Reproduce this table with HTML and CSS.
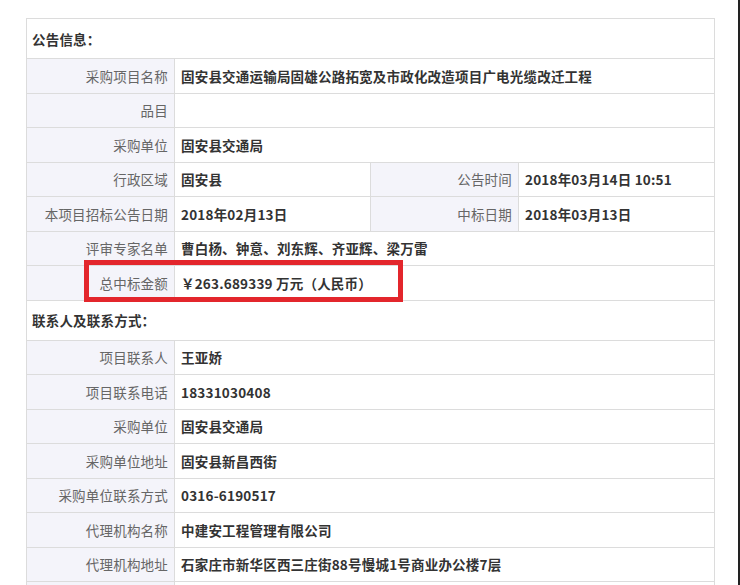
FILE: index.html
```html
<!DOCTYPE html>
<html lang="zh-CN">
<head>
    <meta charset="UTF-8">
    <title>公告信息</title>
    <link rel="stylesheet" href="styles.css">
</head>
<body>
<div class="page">
    <div class="notice">
        <table class="info-table">
            <colgroup>
                <col class="col-label">
                <col class="col-value">
                <col class="col-label">
                <col class="col-value">
            </colgroup>
            <tr class="section">
                <td colspan="4">公告信息：</td>
            </tr>
            <tr>
                <th>采购项目名称</th>
                <td colspan="3">固安县交通运输局固雄公路拓宽及市政化改造项目广电光缆改迁工程</td>
            </tr>
            <tr>
                <th>品目</th>
                <td colspan="3"></td>
            </tr>
            <tr>
                <th>采购单位</th>
                <td colspan="3">固安县交通局</td>
            </tr>
            <tr>
                <th>行政区域</th>
                <td>固安县</td>
                <th>公告时间</th>
                <td>2018年03月14日 10:51</td>
            </tr>
            <tr>
                <th>本项目招标公告日期</th>
                <td>2018年02月13日</td>
                <th>中标日期</th>
                <td>2018年03月13日</td>
            </tr>
            <tr>
                <th>评审专家名单</th>
                <td colspan="3">曹白杨、钟意、刘东辉、齐亚辉、梁万雷</td>
            </tr>
            <tr>
                <th>总中标金额</th>
                <td colspan="3">￥263.689339 万元（人民币）</td>
            </tr>
            <tr class="section">
                <td colspan="4">联系人及联系方式：</td>
            </tr>
            <tr>
                <th>项目联系人</th>
                <td colspan="3">王亚娇</td>
            </tr>
            <tr>
                <th>项目联系电话</th>
                <td colspan="3">18331030408</td>
            </tr>
            <tr>
                <th>采购单位</th>
                <td colspan="3">固安县交通局</td>
            </tr>
            <tr>
                <th>采购单位地址</th>
                <td colspan="3">固安县新昌西街</td>
            </tr>
            <tr>
                <th>采购单位联系方式</th>
                <td colspan="3">0316-6190517</td>
            </tr>
            <tr>
                <th>代理机构名称</th>
                <td colspan="3">中建安工程管理有限公司</td>
            </tr>
            <tr>
                <th>代理机构地址</th>
                <td colspan="3">石家庄市新华区西三庄街88号慢城1号商业办公楼7层</td>
            </tr>
            <tr>
                <th></th>
                <td colspan="3"></td>
            </tr>
        </table>
        <!-- red highlight drawn over the amount row -->
        <div class="highlight"></div>
    </div>
</div>
</body>
</html>
```

FILE: styles.css
```css
/* General Styles */
html, body {
    margin: 0;
    padding: 0;
    height: 100%;
    overflow: hidden;
}

body {
    font-family: "Microsoft YaHei", "Noto Sans CJK SC", sans-serif;
    background-color: #ffffff;
    color: #333;
}

.page {
    padding: 18px 0 0 26px;
    width: 740px;
    height: 585px;
    box-sizing: border-box;
    border-right: 2px solid #222;
}

.notice {
    position: relative;
    width: 687px;
}

/* Info Table */
.info-table {
    width: 687px;
    border-collapse: collapse;
    table-layout: fixed;
    font-size: 13.5px;
    letter-spacing: 0.2px;
}

.col-label {
    width: 148px;
}

.col-value {
    width: 196px;
}

.info-table th,
.info-table td {
    border: 1px solid #dcdcdc;
    height: 33.5px;
    padding: 0 6px;
    white-space: nowrap;
    line-height: 20px;
}

.info-table th {
    background-color: #f4f4fa;
    color: #666;
    font-weight: normal;
    text-align: right;
}

.info-table td {
    background-color: #ffffff;
    color: #333;
    font-weight: bold;
    text-align: left;
}

.info-table .section td {
    height: 39px;
    padding-left: 5px;
    color: #333;
}

/* Highlight box */
.highlight {
    position: absolute;
    left: 58px;
    top: 242px;
    width: 319px;
    height: 42px;
    box-sizing: border-box;
    border: 5px solid #e3262c;
}
```
